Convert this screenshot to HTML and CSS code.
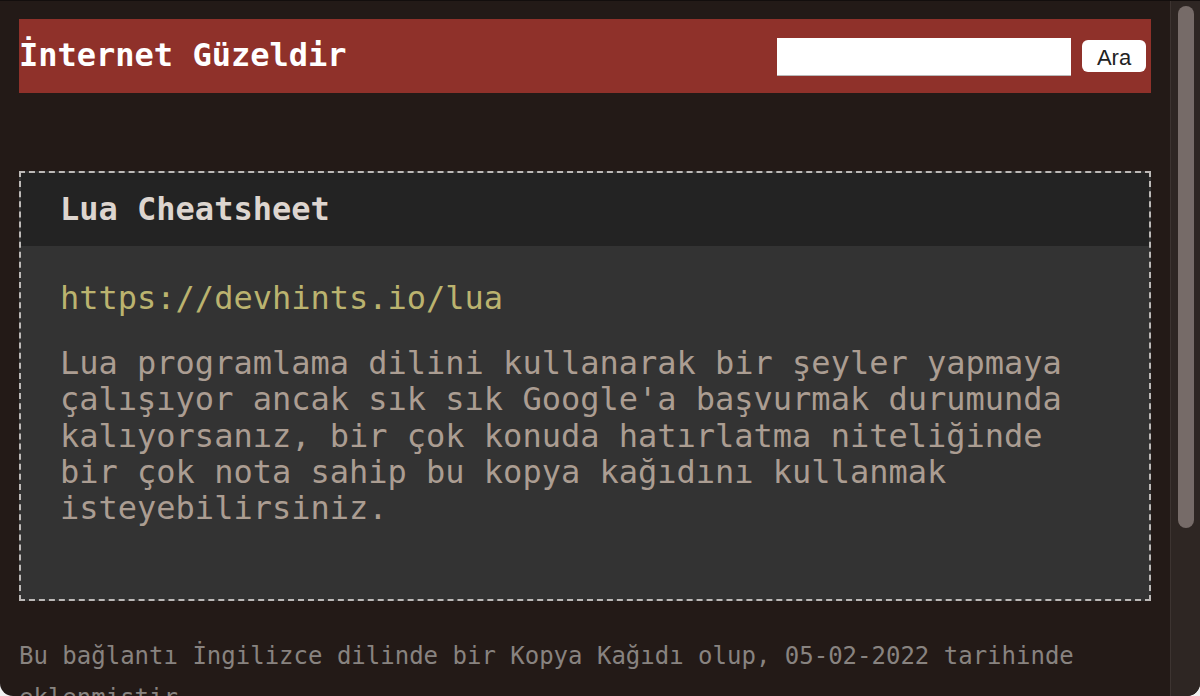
FILE: index.html
```html
<!DOCTYPE html>
<html lang="tr">
<head>
<meta charset="utf-8">
<title>İnternet Güzeldir</title>
<link rel="stylesheet" href="styles.css">
</head>
<body>
<div class="window">
  <main class="page">
    <header class="site-header">
      <h1 class="site-title">İnternet Güzeldir</h1>
      <form class="search">
        <input class="search-input" type="text" aria-label="Ara">
        <button class="search-button" type="button">Ara</button>
      </form>
    </header>

    <article class="card">
      <div class="card-head">
        <h2 class="card-title">Lua Cheatsheet</h2>
      </div>
      <div class="card-body">
        <a class="card-link" href="#">https://devhints.io/lua</a>
        <p class="card-text">Lua programlama dilini kullanarak bir şeyler yapmaya çalışıyor ancak sık sık Google'a başvurmak durumunda kalıyorsanız, bir çok konuda hatırlatma niteliğinde bir çok nota sahip bu kopya kağıdını kullanmak isteyebilirsiniz.</p>
      </div>
    </article>

    <p class="note">Bu bağlantı İngilizce dilinde bir Kopya Kağıdı olup, 05-02-2022 tarihinde eklenmiştir.</p>
  </main>
  <div class="scrollbar"><div class="scroll-thumb"></div></div>
</div>
</body>
</html>
```

FILE: styles.css
```css
html {
  background: #f2f2f2;
}

body {
  margin: 0;
  height: 696px;
  overflow: hidden;
  background: #231a17;
  border-radius: 0 0 13px 13px;
  font-family: "DejaVu Sans Mono", "Liberation Mono", monospace;
}

.window {
  display: flex;
  height: 696px;
  box-sizing: border-box;
  border-top: 1px solid #130e0d;
}

.page {
  flex: 1;
  min-width: 0;
  overflow: hidden;
  padding: 18px 19px 0 19px;
}

.site-header {
  height: 74px;
  background: #8f312a;
  display: flex;
  align-items: center;
  justify-content: space-between;
  padding: 0 5px 0 0;
}

.site-title {
  margin: 0;
  font-size: 32px;
  line-height: 1.1;
  font-weight: bold;
  color: #ffffff;
}

.search {
  display: flex;
  align-items: center;
  gap: 11px;
  margin: 0;
}

.search-input {
  width: 294px;
  height: 38px;
  box-sizing: border-box;
  margin: 1px 0 0 0;
  padding: 0 6px;
  border: none;
  border-bottom: 1px solid #b9b9b9;
  background: #ffffff;
  border-radius: 0;
  outline: none;
}

.search-button {
  width: 64px;
  height: 32px;
  box-sizing: border-box;
  border: none;
  border-radius: 6px;
  background: #ffffff;
  color: #222222;
  font-family: "Liberation Sans", Arial, sans-serif;
  font-size: 22px;
  padding: 3px 0 0 0;
  line-height: 29px;
}

.card {
  margin-top: 78px;
  border: 2px dashed #bdbab8;
  background: #333333;
}

.card-head {
  height: 73px;
  background: #232323;
  display: flex;
  align-items: center;
  padding: 0 39px;
}

.card-title {
  margin: 0;
  font-size: 32px;
  line-height: 1.1;
  font-weight: bold;
  color: #ddd5cf;
}

.card-body {
  padding: 33px 39px 41px 39px;
}

.card-link {
  display: block;
  font-size: 32px;
  line-height: normal;
  color: #bbb36f;
  text-decoration: none;
}

.card-text {
  margin: 28px 0 32px 0;
  font-size: 32px;
  line-height: 36.3px;
  color: #ab9d92;
}

.note {
  margin: 34px 0 0 0;
  font-size: 24px;
  line-height: 42px;
  color: #888380;
}

.scrollbar {
  width: 30px;
  flex: none;
  box-sizing: border-box;
  border-left: 1px solid #3d3431;
  background: #2e2623;
  padding: 5px 0 0 7px;
}

.scroll-thumb {
  width: 16px;
  height: 522px;
  border-radius: 8px;
  background: #766b68;
}
```
